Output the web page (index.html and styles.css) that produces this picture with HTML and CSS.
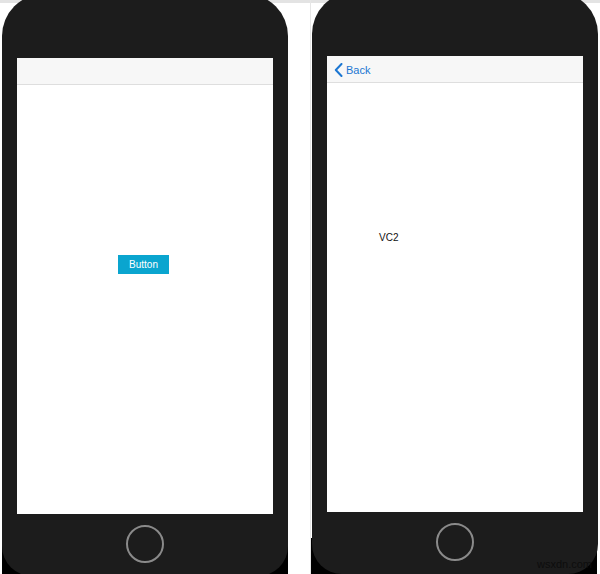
FILE: index.html
```html
<!DOCTYPE html>
<html lang="en">
<head>
<meta charset="utf-8">
<title>Navigation demo</title>
<link rel="stylesheet" href="styles.css">
</head>
<body>
  <div class="stage">
    <div class="slot slot-left">
      <div class="phone phone-left">
        <div class="screen">
          <div class="navbar"></div>
          <div class="content content-center">
            <button class="action-btn" type="button">Button</button>
          </div>
        </div>
        <div class="chin"><span class="home"></span></div>
      </div>
    </div>
    <div class="slot slot-right">
      <div class="phone phone-right">
        <div class="screen">
          <div class="navbar">
            <a class="back" href="#">
              <svg class="chevron" width="9" height="14" viewBox="0 0 9 14" aria-hidden="true">
                <polyline points="7.5,1 1.8,7 7.5,13" fill="none" stroke="currentColor" stroke-width="2" stroke-linecap="round" stroke-linejoin="round"/>
              </svg>
              <span>Back</span>
            </a>
          </div>
          <div class="content content-vc2">
            <p class="label">VC2</p>
          </div>
        </div>
        <div class="chin"><span class="home"></span></div>
      </div>
    </div>
    <span class="watermark">wsxdn.com</span>
  </div>
</body>
</html>
```

FILE: styles.css
```css
* { box-sizing: border-box; }

html, body {
  margin: 0;
  padding: 0;
}

body {
  width: 600px;
  height: 574px;
  overflow: hidden;
  background: linear-gradient(#e3e3e3 0 3px, #ffffff 3px);
  font-family: "Liberation Sans", Arial, sans-serif;
}

.stage {
  position: relative;
  display: flex;
  gap: 24px;
  height: 574px;
  padding-left: 2px;
}

/* each device sits on a dark base that shows behind its lower corners */
.slot {
  width: 286px;
  height: 574px;
  background: linear-gradient(to bottom, transparent calc(100% - 36px), #000 0);
}

.slot-right {
  border-left: 1px solid #e6e6e6;
  margin-left: -2px;
  padding-left: 1px;
  width: 287px;
}

.phone {
  display: flex;
  flex-direction: column;
  align-items: center;
  width: 286px;
  height: 582px;
  padding-top: 64px;
  background: #1c1c1c;
  border-radius: 42px 42px 30px 30px;
}

.phone-left { margin-top: -6px; }
.phone-right { margin-top: -8px; }

.screen {
  display: flex;
  flex-direction: column;
  width: 256px;
  height: 456px;
  background: #ffffff;
}

.navbar {
  display: flex;
  align-items: center;
  height: 27px;
  flex: none;
  background: #f7f7f7;
  border-bottom: 1px solid #dedede;
  padding-left: 7px;
}

.back {
  display: flex;
  align-items: center;
  gap: 3px;
  color: #1b76d2;
  text-decoration: none;
  font-size: 11px;
  padding-top: 1px;
}

.chevron { display: block; }

.content {
  flex: 1;
}

.content-center {
  display: flex;
  justify-content: center;
  padding-top: 170px;
  padding-right: 3px;
}

.action-btn {
  width: 51px;
  height: 19px;
  padding: 0;
  border: 0;
  background: #0aa5cf;
  color: #ffffff;
  font-family: "Liberation Sans", Arial, sans-serif;
  font-size: 10px;
  line-height: 19px;
}

.content-vc2 {
  padding: 149px 0 0 52px;
}

.label {
  margin: 0;
  font-size: 10px;
  line-height: 12px;
  color: #111111;
}

.chin {
  display: flex;
  justify-content: center;
  padding-top: 11px;
}

.home {
  display: block;
  width: 38px;
  height: 38px;
  border: 2px solid #8a8a8a;
  border-radius: 50%;
}

.watermark {
  position: absolute;
  right: 8px;
  bottom: 4px;
  font-family: "Liberation Sans", Arial, sans-serif;
  font-size: 11px;
  color: #0d0d0d;
}
```
